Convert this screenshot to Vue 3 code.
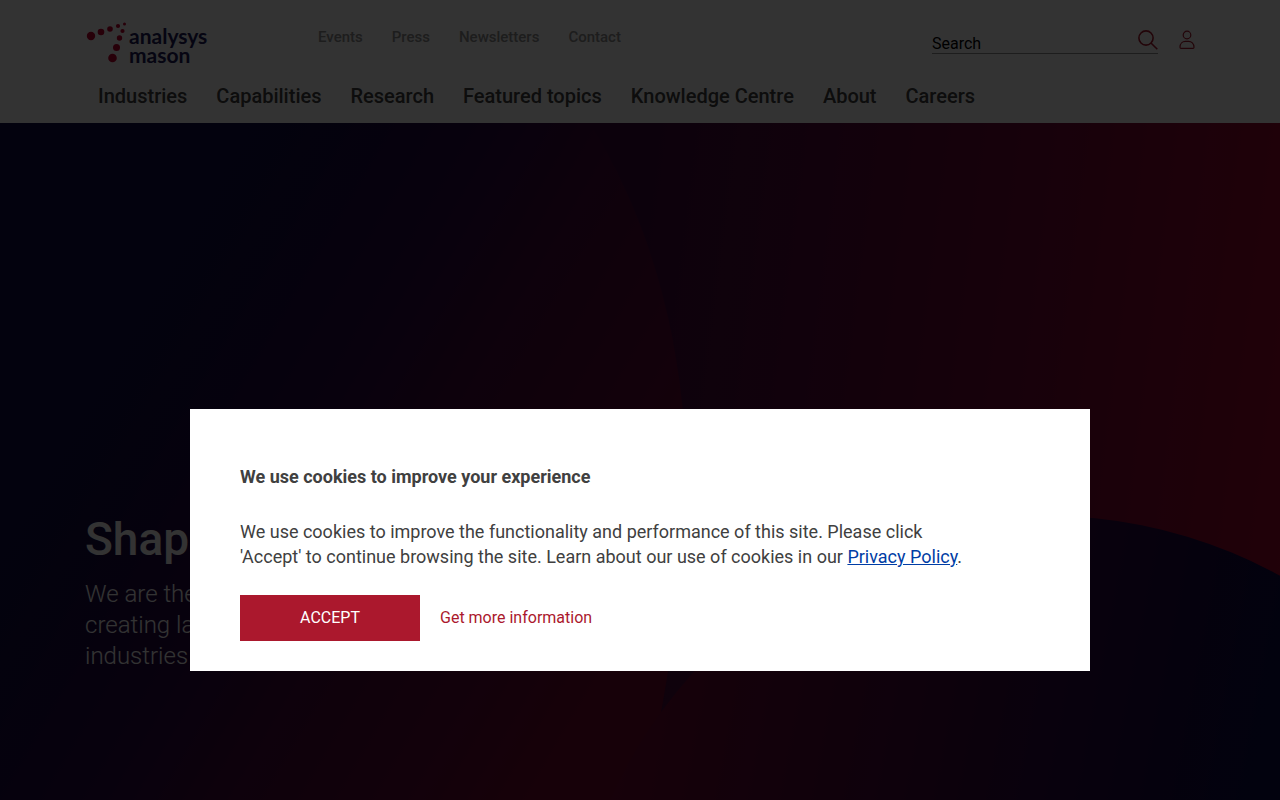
<script setup>
const utilityLinks = ['Events', 'Press', 'Newsletters', 'Contact']
const mainLinks = ['Industries', 'Capabilities', 'Research', 'Featured topics', 'Knowledge Centre', 'About', 'Careers']
const logoDots = [
  { x: 5, y: 14, r: 4.2 },
  { x: 15, y: 10, r: 3.3 },
  { x: 24, y: 7, r: 2.8 },
  { x: 32, y: 4, r: 2.1 },
  { x: 38.5, y: 2, r: 1.5 },
  { x: 36.5, y: 9, r: 2.1 },
  { x: 33.5, y: 16, r: 2.7 },
  { x: 30.5, y: 25.5, r: 3.5 },
  { x: 26.5, y: 36, r: 4.3 },
]
</script>

<template>
  <div class="page">
    <header class="header">
      <div class="container">
        <div class="top-row">
          <a class="logo" href="#" aria-label="Analysys Mason home">
            <svg class="logo-mark" width="42" height="42" viewBox="0 0 42 42" aria-hidden="true">
              <circle v-for="(dot, i) in logoDots" :key="i" :cx="dot.x" :cy="dot.y" :r="dot.r" fill="#c1002f" />
            </svg>
            <span class="logo-text">analysys<br />mason</span>
          </a>
          <nav class="utility" aria-label="Utility">
            <a v-for="link in utilityLinks" :key="link" href="#">{{ link }}</a>
          </nav>
          <form class="search" role="search" @submit.prevent>
            <input type="search" placeholder="Search" aria-label="Search" />
            <button type="submit" aria-label="Submit search">
              <svg width="20" height="20" viewBox="0 0 20 20" fill="none" stroke="#ab182d" stroke-width="1.6" aria-hidden="true">
                <circle cx="8" cy="8" r="7.1" />
                <path d="M13 13L19.3 19.3" />
              </svg>
            </button>
          </form>
          <a class="account" href="#" aria-label="Account">
            <svg width="16" height="20" viewBox="0 0 16 20" fill="none" stroke="#ab182d" stroke-width="1.2" aria-hidden="true">
              <circle cx="8" cy="5" r="3.8" />
              <path d="M2 18.4H14Q15 18.4 15 17.2C15 13.4 12.4 11.3 9.6 11.3H6.4C3.6 11.3 1 13.4 1 17.2Q1 18.4 2 18.4Z" />
            </svg>
          </a>
        </div>
        <nav class="main-nav" aria-label="Main">
          <a v-for="link in mainLinks" :key="link" href="#">{{ link }}</a>
        </nav>
      </div>
    </header>

    <main class="hero">
      <svg class="hero-art" viewBox="0 0 1280 677" preserveAspectRatio="xMidYMid slice" aria-hidden="true">
        <defs>
          <linearGradient id="backdrop" gradientUnits="userSpaceOnUse" x1="640" y1="0" x2="1340" y2="90">
            <stop offset="0" stop-color="#3c083f" />
            <stop offset="0.15" stop-color="#4b0a3e" />
            <stop offset="0.6" stop-color="#780537" />
            <stop offset="1" stop-color="#a5052d" />
          </linearGradient>
          <linearGradient id="sweep" gradientUnits="userSpaceOnUse" x1="0" y1="0" x2="691" y2="403">
            <stop offset="0.2" stop-color="#0f0a46" />
            <stop offset="0.34" stop-color="#140a44" />
            <stop offset="0.52" stop-color="#280843" />
            <stop offset="0.68" stop-color="#46083c" />
            <stop offset="0.88" stop-color="#5f0837" />
            <stop offset="1" stop-color="#73052d" />
          </linearGradient>
          <linearGradient id="disc" gradientUnits="userSpaceOnUse" x1="640" y1="520" x2="1260" y2="640">
            <stop offset="0" stop-color="#730832" />
            <stop offset="0.4" stop-color="#4b083c" />
            <stop offset="0.7" stop-color="#2a0841" />
            <stop offset="1" stop-color="#0c0a46" />
          </linearGradient>
        </defs>
        <rect width="1280" height="677" fill="url(#backdrop)" />
        <path d="M0 0H590Q670 130 684 300Q686 520 640 677H0Z" fill="url(#sweep)" />
        <circle cx="1048" cy="873" r="480" fill="url(#disc)" />
      </svg>
      <div class="container hero-copy">
        <h1>Shap</h1>
        <p>We are the<br />creating la<br />industries</p>
      </div>
    </main>

    <div class="overlay">
      <section class="dialog" role="dialog" aria-modal="true" aria-labelledby="cookie-title">
        <h2 id="cookie-title">We use cookies to improve your experience</h2>
        <p>
          We use cookies to improve the functionality and performance of this site. Please click
          'Accept' to continue browsing the site. Learn about our use of cookies in our
          <a href="#">Privacy Policy</a>.
        </p>
        <div class="actions">
          <button type="button">ACCEPT</button>
          <a href="#">Get more information</a>
        </div>
      </section>
    </div>
  </div>
</template>

<style>
body {
  margin: 0;
}
</style>

<style scoped>
.page {
  display: flex;
  flex-direction: column;
  min-height: 100vh;
  font-family: Roboto, "Liberation Sans", sans-serif;
  color: #404040;
}
.page *,
.page {
  box-sizing: border-box;
}
.container {
  width: 100%;
  max-width: 1110px;
  margin: 0 auto;
}
.header {
  background: #fff;
  padding: 21px 0 12px;
}
.top-row {
  display: flex;
  align-items: flex-start;
  height: 54px;
}
.logo {
  display: flex;
  width: 233px;
  color: #221c5a;
  text-decoration: none;
}
.logo-mark {
  margin: 1px 1px 0;
}
.logo-text {
  font: 700 21px/19px Lato, sans-serif;
  padding-top: 5px;
}
.utility {
  display: flex;
  gap: 29px;
  font-size: 15px;
  line-height: 20px;
  font-weight: 500;
  padding-top: 6px;
}
.utility a {
  color: #919191;
  text-decoration: none;
}
.search {
  display: flex;
  width: 226px;
  height: 25px;
  margin: 8px 21px 0 auto;
  border-bottom: 1px solid #919191;
}
.search input {
  flex: 1;
  min-width: 0;
  padding: 6px 0 0;
  border: 0;
  outline: 0;
  background: none;
  font: 400 16px/18px Roboto, sans-serif;
}
.search input::placeholder {
  color: #000;
  opacity: 1;
}
.search button {
  display: flex;
  padding: 1px 0 0;
  border: 0;
  background: none;
}
.account {
  display: flex;
  margin: 9px 0 0;
}
.main-nav {
  display: flex;
  gap: 29px;
  padding: 9px 13px 3px;
  font-size: 20px;
  line-height: 24px;
  font-weight: 500;
}
.main-nav a {
  color: #404040;
  text-decoration: none;
}
.hero {
  position: relative;
  display: flex;
  flex: 1;
  align-items: flex-end;
  overflow: hidden;
  background: #0f0a46;
}
.hero-art {
  position: absolute;
  inset: 0;
  width: 100%;
  height: 100%;
}
.hero-copy {
  position: relative;
  padding-bottom: 128px;
  color: #fff;
}
.hero-copy h1 {
  margin: 0 0 12px;
  font-size: 46px;
  line-height: 56px;
  font-weight: 500;
}
.hero-copy p {
  margin: 0;
  font-size: 24px;
  line-height: 31px;
  font-weight: 300;
}
.overlay {
  position: fixed;
  inset: 0;
  display: flex;
  align-items: flex-end;
  justify-content: center;
  padding-bottom: 129px;
  background: rgba(0, 0, 0, 0.8);
}
.dialog {
  width: 100%;
  max-width: 900px;
  padding: 55px 50px 30px;
  background: #fff;
  font-size: 18px;
  line-height: 25px;
}
.dialog h2 {
  margin: 0 0 30px;
  font-size: 18px;
  line-height: 25px;
  font-weight: 700;
}
.dialog p {
  max-width: 740px;
  margin: 0 0 26px;
}
.dialog p a {
  color: #003da5;
}
.actions {
  display: flex;
  align-items: center;
  gap: 20px;
  font-size: 16px;
  line-height: 24px;
}
.actions button {
  width: 180px;
  height: 46px;
  border: 0;
  background: #ab182d;
  color: #fff;
  font: 400 16px/20px Roboto, sans-serif;
}
.actions a {
  color: #ab182d;
  text-decoration: none;
}
</style>
